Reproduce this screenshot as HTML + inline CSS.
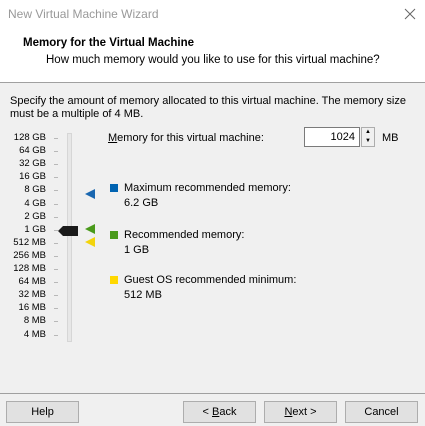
<html><head><style>
body{margin:0;width:425px;height:426px;background:#f0f0f0;font-family:"Liberation Sans",sans-serif;font-size:11px;color:#000;position:relative;overflow:hidden}
.a{position:absolute;white-space:nowrap}
.top{position:absolute;left:0;top:0;width:425px;height:82px;background:#fff;border-bottom:1px solid #a0a0a0}
.lbl{position:absolute;right:379px;text-align:right;font-size:9.5px}
.tick{position:absolute;left:54px;width:4px;height:1px;background:#b8b8b8}
.btn{position:absolute;top:401px;width:71px;height:20px;border:1px solid #adadad;background:#e1e1e1;text-align:center;line-height:20px}
.sq{position:absolute;width:8px;height:8px}
</style></head><body>
<div class="top">
<div class="a" style="left:8px;top:7px;color:#999;font-size:12px">New Virtual Machine Wizard</div>
<svg class="a" style="left:404px;top:8px" width="12" height="12"><path d="M1 1L11 11M11 1L1 11" stroke="#666" stroke-width="1"/></svg>
<div class="a" style="left:23px;top:37px;font-weight:bold;font-size:11.5px">Memory for the Virtual Machine</div>
<div class="a" style="left:46px;top:54px;font-size:11.5px">How much memory would you like to use for this virtual machine?</div>
</div>
<div class="a" style="left:10px;top:95px;line-height:13px">Specify the amount of memory allocated to this virtual machine. The memory size<br>must be a multiple of 4 MB.</div>
<div id="scale"></div>
<div style="position:absolute;left:67px;top:133px;width:3px;height:207px;border:1px solid #d6d6d6;background:#e7e7e7"></div>
<svg class="a" style="left:58px;top:224px" width="22" height="14"><polygon points="0,7 5,2 20,2 20,12 5,12" fill="#1a1a1a"/></svg>
<svg class="a" style="left:85px;top:188px" width="12" height="60">
<polygon points="0,6 10,1 10,11" fill="#1a67b0"/>
<polygon points="0,41 10,36 10,46" fill="#4a9a1b"/>
<polygon points="0,54 10,49 10,59" fill="#f3d40c"/>
</svg>
<div class="a" style="left:108px;top:132px"><u>M</u>emory for this virtual machine:</div>
<div class="a" style="left:304px;top:127px;width:56px;height:20px;background:#fff;border:1px solid #7a7a7a;text-align:right;box-sizing:border-box;padding-right:4px;line-height:18px">1024</div>
<div class="a" style="left:361px;top:127px;width:14px;height:20px;border:1px solid #adadad;box-sizing:border-box;background:#f0f0f0;font-size:6px;text-align:center;line-height:9px">▲<br>▼</div>
<div class="a" style="left:382px;top:132px">MB</div>
<div class="sq" style="left:110px;top:184px;background:#0063b1"></div>
<div class="a" style="left:124px;top:182px">Maximum recommended memory:</div>
<div class="a" style="left:124px;top:197px">6.2 GB</div>
<div class="sq" style="left:110px;top:231px;background:#4a9a1b"></div>
<div class="a" style="left:124px;top:229px">Recommended memory:</div>
<div class="a" style="left:124px;top:244px">1 GB</div>
<div class="sq" style="left:110px;top:276px;background:#ffd800"></div>
<div class="a" style="left:124px;top:274px">Guest OS recommended minimum:</div>
<div class="a" style="left:124px;top:289px">512 MB</div>
<div style="position:absolute;left:0;top:393px;width:425px;height:1px;background:#a0a0a0"></div>
<div class="btn" style="left:6px">Help</div>
<div class="btn" style="left:183px">&lt; <u>B</u>ack</div>
<div class="btn" style="left:264px"><u>N</u>ext &gt;</div>
<div class="btn" style="left:345px">Cancel</div>
<script>
var L=["128 GB","64 GB","32 GB","16 GB","8 GB","4 GB","2 GB","1 GB","512 MB","256 MB","128 MB","64 MB","32 MB","16 MB","8 MB","4 MB"],h="";
for(var i=0;i<16;i++){var y=138+i*13.1;h+='<div class="lbl" style="top:'+(y-6)+'px">'+L[i]+'</div><div class="tick" style="top:'+Math.round(y)+'px"></div>';}
document.getElementById("scale").innerHTML=h;
</script>
</body></html>
